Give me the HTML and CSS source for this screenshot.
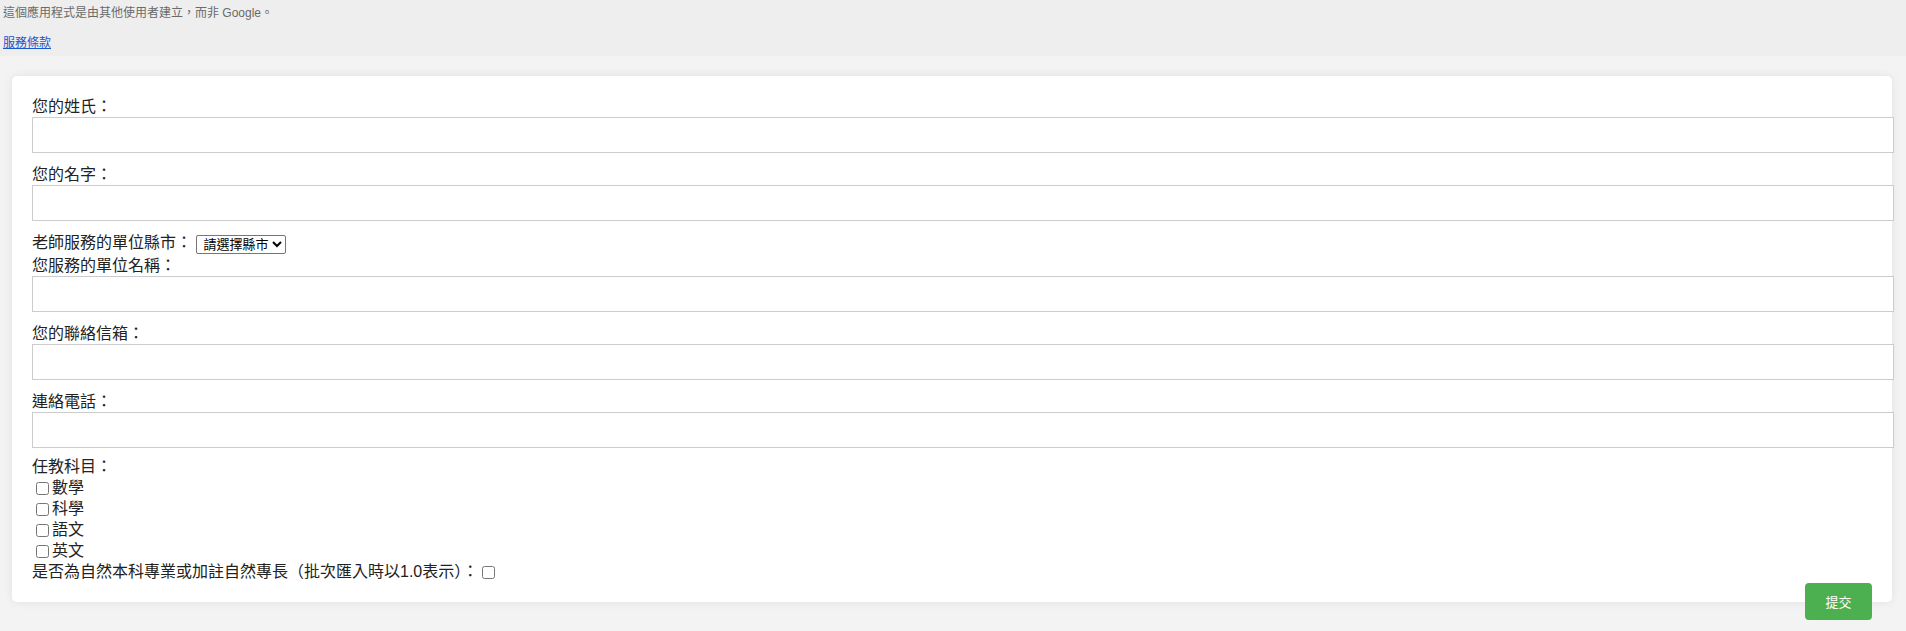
FILE: index.html
```html
<!DOCTYPE html>
<html lang="zh-Hant">
<head>
<meta charset="utf-8">
<title>表單</title>
<link rel="stylesheet" href="styles.css">
</head>
<body>
<div class="banner">
  <div class="notice">這個應用程式是由其他使用者建立，而非 Google。</div>
  <a class="terms" href="#">服務條款</a>
</div>
<div class="page">
  <form class="card">
    <label class="lbl">您的姓氏：</label>
    <input class="field" type="text">
    <label class="lbl">您的名字：</label>
    <input class="field" type="text">
    <div class="row">老師服務的單位縣市： <select class="city"><option>請選擇縣市</option></select></div>
    <label class="lbl">您服務的單位名稱：</label>
    <input class="field" type="text">
    <label class="lbl">您的聯絡信箱：</label>
    <input class="field" type="text">
    <label class="lbl">連絡電話：</label>
    <input class="field" type="text">
    <div class="subjects">
      <div class="line">任教科目：</div>
      <label class="line"><input class="box" type="checkbox">數學</label>
      <label class="line"><input class="box" type="checkbox">科學</label>
      <label class="line"><input class="box" type="checkbox">語文</label>
      <label class="line"><input class="box" type="checkbox">英文</label>
      <div class="line">是否為自然本科專業或加註自然專長（批次匯入時以1.0表示）：<input class="box" type="checkbox"></div>
    </div>
    <button class="submit" type="button">提交</button>
  </form>
</div>
</body>
</html>
```
FILE: styles.css
```css
html, body {
  margin: 0;
  padding: 0;
}
body {
  background: #f3f3f3;
  font-family: "Liberation Sans", "Noto Sans CJK TC", sans-serif;
  color: #222;
}
.banner {
  background: #eeeeee;
  padding: 4px 3px;
  height: 48px;
}
.notice {
  font-size: 12px;
  line-height: 18px;
  color: #6a6a6a;
}
.terms {
  display: inline-block;
  margin-top: 12px;
  font-size: 12px;
  line-height: 18px;
  color: #1a55cc;
  text-decoration: underline;
}
.page {
  padding: 20px 14px 20px 12px;
}
.card {
  position: relative;
  display: block;
  background: #fff;
  border-radius: 5px;
  box-shadow: 0 0 10px rgba(0, 0, 0, 0.08);
  padding: 17px 20px 20px;
  font-size: 16px;
  font-family: "Liberation Sans", "Noto Sans CJK TC", sans-serif;
}
.lbl {
  display: block;
  line-height: 20px;
  padding-top: 4px;
  margin-bottom: 0;
}
.field {
  display: block;
  box-sizing: content-box;
  width: 100%;
  height: 14px;
  padding: 10px;
  margin: 0 0 8px;
  border: 1px solid #cccccc;
  border-radius: 0;
  background: #fff;
  outline: none;
}
.row {
  padding-top: 4px;
  line-height: 19px;
  height: 19px;
}
.city {
  width: 90px;
  height: 19px;
  font-size: 13px;
  font-family: "Liberation Sans", "Noto Sans CJK TC", sans-serif;
  color: #000;
  border: 1px solid #767676;
  border-radius: 2px;
  background: #fff;
  padding: 0 0 0 2px;
  vertical-align: -1px;
}
.subjects {
  margin-top: 8px;
}
.line {
  display: block;
  line-height: 21px;
  height: 21px;
}
.box {
  width: 13px;
  height: 13px;
  margin: 3px 3px 3px 4px;
  vertical-align: -2px;
}
.submit {
  position: absolute;
  right: 20px;
  bottom: -18px;
  width: 67px;
  height: 37px;
  background: #4caf50;
  color: #fff;
  border: none;
  border-radius: 4px;
  font-size: 13px;
  font-family: "Liberation Sans", "Noto Sans CJK TC", sans-serif;
  padding: 0;
}
```
